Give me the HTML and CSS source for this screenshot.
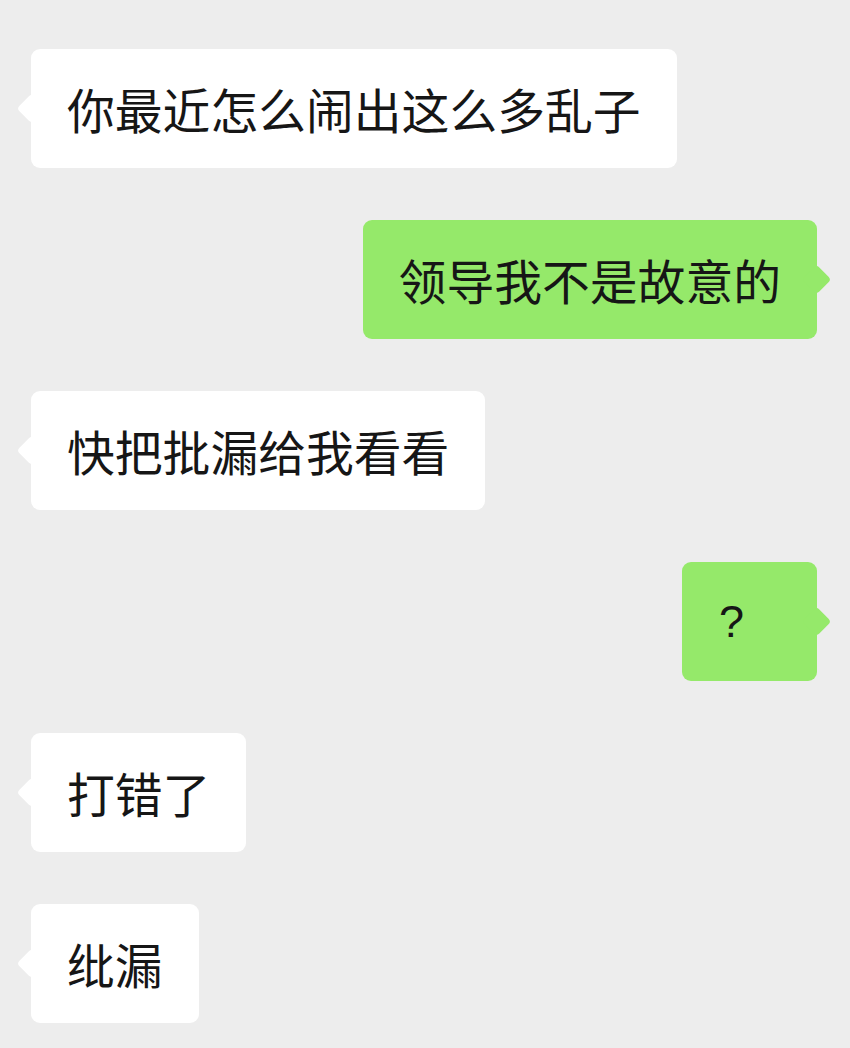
FILE: index.html
```html
<!DOCTYPE html>
<html lang="zh-CN">
<head>
    <meta charset="UTF-8">
    <meta name="viewport" content="width=device-width, initial-scale=1.0">
    <title>聊天记录</title>
    <link rel="stylesheet" href="styles.css">
</head>
<body>
    <div class="chat">
        <div class="bubble left">你最近怎么闹出这么多乱子</div>
        <div class="bubble right">领导我不是故意的</div>
        <div class="bubble left">快把批漏给我看看</div>
        <div class="bubble right short">?</div>
        <div class="bubble left">打错了</div>
        <div class="bubble left">纰漏</div>
    </div>
</body>
</html>
```

FILE: styles.css
```css
body {
    margin: 0;
    background-color: #ededed;
    font-family: "Noto Sans CJK SC", "Noto Sans", sans-serif;
    color: #161616;
}
.chat {
    display: flex;
    flex-direction: column;
    align-items: flex-start;
    gap: 52px;
    padding: 49px 33px 40px 31px;
}
.bubble {
    position: relative;
    box-sizing: border-box;
    height: 119px;
    display: flex;
    align-items: center;
    padding: 0 36px;
    font-size: 47.8px;
    line-height: 1;
    border-radius: 9px;
    white-space: nowrap;
}
.bubble::before {
    content: "";
    position: absolute;
    top: 50%;
    width: 21px;
    height: 21px;
    margin-top: -10.5px;
    border-radius: 4px;
    transform: rotate(45deg);
}
.left {
    background-color: #ffffff;
}
.left::before {
    left: -10px;
    background-color: #ffffff;
}
.right {
    align-self: flex-end;
    background-color: #95e96a;
}
.right::before {
    right: -10px;
    background-color: #95e96a;
}
.short {
    min-width: 135px;
    padding-left: 37px;
    font-family: "Liberation Sans", sans-serif;
    font-size: 45px;
}
```
